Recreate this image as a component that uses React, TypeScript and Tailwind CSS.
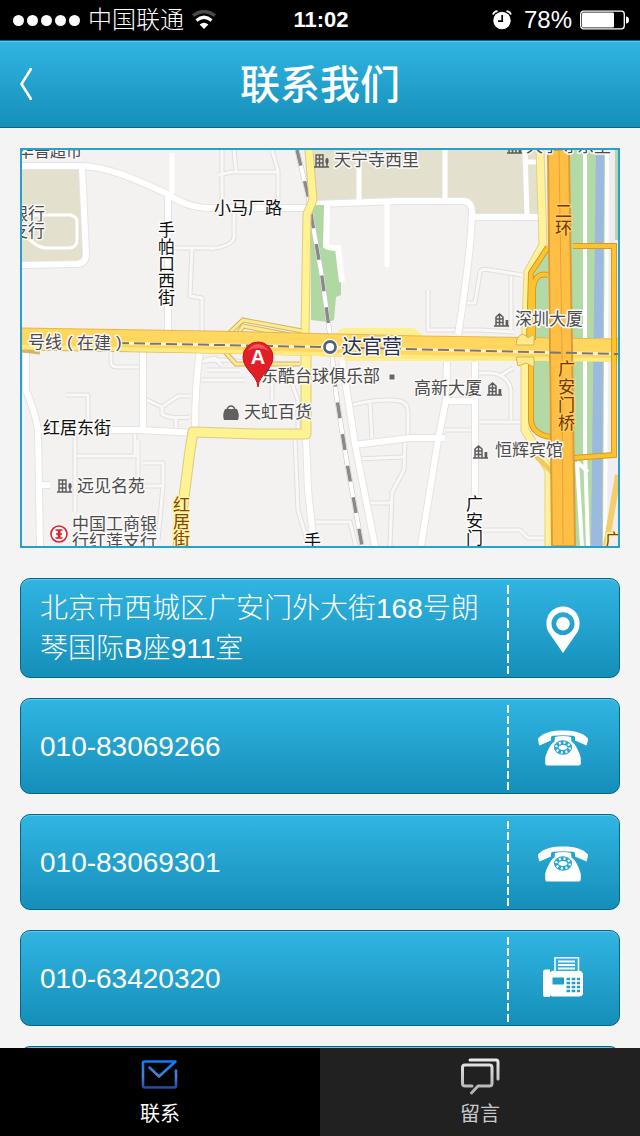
import type { ReactNode } from "react";

const surface =
  "bg-linear-to-b from-[#31b5e2] to-[#138fb9] border-[#05658a] shadow-[inset_0_1px_0_#5cc8ec]";

function StatusBar() {
  return (
    <div className="flex h-10 shrink-0 items-center bg-black text-2xl leading-10 whitespace-nowrap text-white">
      <div className="flex flex-1 items-center pl-[13px]">
        <div className="flex gap-[3px]">
          {[0, 1, 2, 3, 4].map((dot) => (
            <span key={dot} className="size-[11px] rounded-full bg-white" />
          ))}
        </div>
        <span className="ml-2 font-light">中国联通</span>
        <svg className="ml-2 h-5 w-6" viewBox="0 0 24 20" fill="none" aria-label="Wi-Fi">
          <path d="M1 5.500 Q12 -2.500 23 5.500" stroke="#4a4a4a" strokeWidth="3.200" />
          <path d="M4.500 10.500 Q12 4 19.500 10.500" stroke="#fff" strokeWidth="3.200" />
          <path d="M12 19 L7.600 14.500 Q12 10.800 16.400 14.500 Z" fill="#fff" />
        </svg>
      </div>
      <span className="text-center text-[22px] font-bold">11:02</span>
      <div className="flex flex-1 items-center justify-end pr-[11px]">
        <svg className="h-5 w-5" viewBox="0 0 20 20" fill="none" aria-label="Alarm">
          <circle cx="10" cy="10.500" r="8.700" fill="#fff" />
          <path d="M1 4.500 Q2 1.500 5.500 1.200 M19 4.500 Q18 1.500 14.500 1.200" stroke="#fff" strokeWidth="1.700" />
          <path d="M10.200 5 V11.200 H6" stroke="#000" strokeWidth="1.700" />
        </svg>
        <span className="ml-3">78%</span>
        <svg className="ml-2 h-5 w-[49px]" viewBox="0 0 49 20" fill="none" aria-label="Battery">
          <rect x=".7" y="1.200" width="43.600" height="17.600" rx="3" stroke="#fff" strokeWidth="1.300" />
          <rect x="2" y="2.500" width="32" height="15" rx="1" fill="#fff" />
          <path d="M46 6.500 Q49 6.500 49 10 Q49 13.500 46 13.500 Z" fill="#fff" />
        </svg>
      </div>
    </div>
  );
}

type LabelProps = { x: number; y: number; children: string; size?: number; fill?: string };

function Label({ x, y, children, size = 17, fill = "#4c4c4c" }: LabelProps) {
  return (
    <text x={x} y={y} fontSize={size} fill={fill} stroke="#faf9f8" strokeWidth="3" paintOrder="stroke" strokeLinejoin="round">
      {children}
    </text>
  );
}

function VerticalLabel({
  x,
  y,
  children,
  step = 17,
  fill = "#111",
  halo = "#fff",
}: LabelProps & { step?: number; halo?: string }) {
  return (
    <text fontSize="17" fill={fill} stroke={halo} strokeWidth="3" paintOrder="stroke" strokeLinejoin="round">
      {[...children].map((char, i) => (
        <tspan key={i} x={x} y={y + i * step}>
          {char}
        </tspan>
      ))}
    </text>
  );
}

function Tower({ x, y }: { x: number; y: number }) {
  return (
    <g transform={`translate(${x} ${y})`} stroke="#5c5c5c" strokeWidth="1.500" fill="none">
      <path d="M0 13 H15 M2 13 V4 L5.500 1 L9 4 V13 M5.500 2 V13 M2 6 H9 M2 9.500 H9 M12.500 13 V7" />
      <path d="M13 7 V13" strokeWidth="2.500" />
    </g>
  );
}

function Estate({ x, y }: { x: number; y: number }) {
  return (
    <g transform={`translate(${x} ${y})`} stroke="#5c5c5c" strokeWidth="1.400" fill="none">
      <path d="M0 13 H15 M2 13 V1 H9 V13 M5.500 1 V13 M2 5 H9 M2 9 H9 M13 8 V13" />
      <ellipse cx="13" cy="7" rx="1.600" ry="3" fill="#5c5c5c" stroke="none" />
    </g>
  );
}

const minorRoads = [
  "M222 150 V206",
  "M218 175 L232 172 H278",
  "M234 150 L236 171",
  "M272 150 L278 171 V204",
  "M234 210 V238 Q232 246 210 249",
  "M175 248 H212",
  "M192 249 L190 296 L202 298 V335",
  "M428 290 V330 H480 L514 332",
  "M466 303 H475 L480 272 Q482 268 490 270 L522 275",
  "M511 276 V330",
  "M111 350 V362 Q111 367 117 367 H142",
  "M66 395 H88 V428",
  "M75 430 V512",
  "M77 456 H135 V432",
  "M138 440 V480 M143 463 H163 V486 M163 486 H120 M163 486 L158 540",
  "M145 399 L162 407 L178 396 H191 M162 407 V414 Q168 419 190 417 M176 418 V430",
  "M198 362 Q220 358 245 362 M200 380 H245 M207 370 H240",
  "M205 360 L215 358 L222 366",
  "M295 438 L298 510 L308 544",
  "M272 360 V400 M285 365 L298 400 V430",
  "M314 522 H350 L356 546",
  "M352 405 Q380 398 400 401 Q408 403 408 412 V438",
  "M370 403 L372 440",
  "M405 440 L404 470 L392 492 L390 546",
  "M356 459 L403 457",
  "M362 503 H392",
  "M445 430 H473 M479 422 H524 M511 420 V390 Q508 374 490 373 H478",
  "M500 376 L513 368",
  "M480 530 H520 L528 538 H548",
];

const majorRoads = [
  "M22 166 H82 C112 167 142 183 168 194 C184 206 200 209 222 208 H306",
  "M82 168 L86 254 Q86 264 76 264 L22 265",
  "M168 194 V335",
  "M143 350 V430",
  "M200 350 Q195 385 195 432",
  "M26 346 V390 Q36 415 38 430 L40 546",
  "M40 430 H140 L195 433",
  "M40 485 H50",
  "M314 204 L400 201 H465 Q473 203 472 216 Q470 260 458 335",
  "M472 217 H542",
  "M342 360 L355 444 L375 546",
  "M354 445 L410 438 H445",
  "M447 362 L446 400 L438 440 L421 546",
  "M475 362 V495",
  "M446 401 H476",
  "M306 438 L308 490 L314 546",
];

function MapView() {
  return (
    <svg
      className="block h-auto w-full border-2 border-[#27a0cb]"
      viewBox="22 150 596 396"
      fill="none"
      role="img"
      aria-label="地图"
    >
      <rect x="22" y="150" width="596" height="396" fill="#f4f2f1" />
      <path d="M22 168 H80 L84 250 Q84 261 74 262 L22 263 Z" fill="#e3e0ce" />
      <path d="M314 150 H538 L540 214 H475 Q474 200 464 199 L316 202 Z" fill="#e3e0ce" />

      {/* Local streets: a faint casing below a pale core */}
      <g stroke="#e1dfdd" strokeWidth="5" strokeLinejoin="round">
        {minorRoads.map((d) => <path key={d} d={d} />)}
      </g>
      <g stroke="#f9f8f7" strokeWidth="3" strokeLinejoin="round">
        {minorRoads.map((d) => <path key={d} d={d} />)}
      </g>
      <g stroke="#e6e4e2" strokeWidth="8" strokeLinejoin="round">
        {majorRoads.map((d) => <path key={d} d={d} />)}
      </g>
      <g stroke="#fff" strokeWidth="6" strokeLinejoin="round">
        {majorRoads.map((d) => <path key={d} d={d} />)}
      </g>
      <g stroke="#fff" strokeWidth="5" strokeLinecap="round">
        <path d="M172 155 V192 M359 163 V200 M387 204 V265 M445 150 V200" />
        <path d="M525 150 L527 216 M525 162 H540" />
        <path d="M22 215 H70 Q77 216 77 222 V240 Q77 248 68 248 H45 Q38 247 30 240" strokeWidth="3" />
      </g>

      <path d="M311 205 H325 V248 L336 251 L341 280 V295 L336 297 L334 320 Q330 323 320 321 L311 320 Z" fill="#b0d8a2" />
      <path d="M327 205 L326 246 Q328 248 338 248 L342 282" stroke="#fff" strokeWidth="6" />

      <path d="M297 150 L308 195 L312 220 L322 277 L330 335 L336 393 L347 463 L362 546" stroke="#c9c7c5" strokeWidth="5" />
      <path d="M297 150 L308 195 L312 220 L322 277 L330 335 L336 393 L347 463 L362 546" stroke="#fff" strokeWidth="4" />
      <path d="M297 150 L308 195 L312 220 L322 277 L330 335 L336 393 L347 463 L362 546" stroke="#8b8987" strokeWidth="3.400" strokeDasharray="16 16" />

      {/* River and green belt */}
      <path d="M570 150 H606 V546 H572 Z" fill="#b3d9a6" />
      <path d="M606 150 H618 V546 H606 Z" fill="#efedf0" />
      <path d="M615 150 H618 V240 H615 Z" fill="#b3d9a6" />
      <path d="M596 150 H604 L602 546 H591 Z" fill="#9cb9df" />
      <path d="M585 150 V450 L588 546 M607 150 L605 546 M577 462 L582 546 M577 462 L588 472" stroke="#fff" strokeWidth="4" />
      <path d="M548 250 L534 275 V425 Q538 437 550 437 Z" fill="#b3d9a6" />

      {/* Yellow streets */}
      <g stroke="#dcc987" strokeLinejoin="round">
        <path d="M309 150 L313 200 L307 214 L305 335" strokeWidth="9" />
        <path d="M306 345 V434 L256 434 L193 432 L190 450 L184 497 L178 546" strokeWidth="11" />
      </g>
      <g stroke="#fff291" strokeLinejoin="round">
        <path d="M309 150 L313 200 L307 214 L305 335" strokeWidth="7" />
        <path d="M306 345 V434 L256 434 L193 432 L190 450 L184 497 L178 546" strokeWidth="9" />
      </g>
      <path d="M540 150 L543 245 L528 272 L525 350 L525 430 L549 470 V546" stroke="#e2d28f" strokeWidth="9" />
      <path d="M540 150 L543 245 L528 272 L525 350 L525 430 L549 470 V546" stroke="#fff29a" strokeWidth="7" />
      <path d="M22 350 L40 352 M226 336 L243 320 L302 331 M238 334 L243 326 L290 335 M225 352 L236 364 H300" stroke="#cdb66b" strokeWidth="5" />
      <path d="M226 336 L243 320 L302 331 M238 334 L243 326 L290 335 M225 352 L236 364 H300" stroke="#ffe98b" strokeWidth="3" />

      {/* Boulevard */}
      <path d="M336 334 Q338 329 345 328 H410 Q418 328 424 338 H618 V361 H345 Z" fill="#ffef90" />
      <path d="M22 339 L210 342 L420 347 L618 350" stroke="#e3b84b" strokeWidth="23" />
      <path d="M22 339 L210 342 L420 347 L618 350" stroke="#ffd75e" strokeWidth="21" />
      <path d="M22 347 L210 351 L420 357 L618 360" stroke="#ffea7f" strokeWidth="4" />
      <path d="M118 343 L320 347 L618 354" stroke="#fff2c8" strokeWidth="3" />

      {/* Ring road and ramps */}
      <path d="M573 246 H614 V455 L573 458 M548 247 L531 273 L529 340 M548 275 Q534 272 533 290 V340 M531 362 V420 Q532 434 550 437" stroke="#d89a20" strokeWidth="6" />
      <path d="M573 246 H614 V455 L573 458 M548 247 L531 273 L529 340 M548 275 Q534 272 533 290 V340 M531 362 V420 Q532 434 550 437" stroke="#fcc331" strokeWidth="4" />
      <path d="M517 339 Q522 330 528 338 L534 334 V345 H516 Z M516 357 H534 V367 L526 363 L518 366 Z" fill="#ffe98b" stroke="#d5b458" />
      <path d="M535 455 L554 474" stroke="#f4c85a" strokeWidth="5" />
      <path d="M548 150 H569 L572 350 L575 546 H552 L550 350 Z" fill="#ffbf45" stroke="#dd9c35" strokeWidth="2" />
      <path d="M559 150 L562 350 L563 546" stroke="#e7a238" strokeWidth="1" />
      <path d="M618 475 L606 546" stroke="#f2cf6b" strokeWidth="6" />
      <path d="M118 343 L320 347 L618 354" stroke="#7c776d" strokeWidth="2" strokeDasharray="11 5" />

      <g>
        <Label x={18} y={157} size={16}>华普超市</Label>
        <Label x={11} y={220}>银行</Label>
        <Label x={11} y={237}>支行</Label>
        <Label x={334} y={166}>天宁寺西里</Label>
        <Label x={526} y={152}>天宁寺东里</Label>
        <Label x={214} y={214} fill="#111">小马厂路</Label>
        <Label x={515} y={325}>深圳大厦</Label>
        <Label x={28} y={348}>号线</Label>
        <Label x={67} y={348}>(</Label>
        <Label x={77} y={349}>在建</Label>
        <Label x={116} y={348}>)</Label>
        <Label x={261} y={382}>东酷台球俱乐部</Label>
        <Label x={342} y={354} size={20} fill="#25304d">达官营</Label>
        <Label x={414} y={394}>高新大厦</Label>
        <Label x={244} y={418}>天虹百货</Label>
        <Label x={43} y={434} fill="#111">红居东街</Label>
        <Label x={495} y={456}>恒辉宾馆</Label>
        <Label x={77} y={492}>远见名苑</Label>
        <Label x={72} y={530}>中国工商银</Label>
        <Label x={72} y={547}>行红莲支行</Label>
        <VerticalLabel x={158} y={236}>手帕口西街</VerticalLabel>
        <VerticalLabel x={466} y={510}>广安门</VerticalLabel>
        <VerticalLabel x={304} y={547}>手</VerticalLabel>
        <VerticalLabel x={555} y={217} fill="#6f3800" halo="#ffc659">二环</VerticalLabel>
        <VerticalLabel x={558} y={375} step={18} fill="#6f3800" halo="#ffc659">广安门桥</VerticalLabel>
        <VerticalLabel x={173} y={511} fill="#85450a" halo="#fff3a5">红居街</VerticalLabel>
        <VerticalLabel x={605} y={546} fill="#85450a" halo="#fff3a5">广</VerticalLabel>
      </g>

      <Estate x={314} y={154} />
      <Estate x={57} y={479} />
      <Tower x={507} y={140} />
      <Tower x={494} y={313} />
      <Tower x={487} y={382} />
      <Tower x={473} y={445} />
      <rect x="389" y="374" width="6" height="6" fill="#666" stroke="#faf9f8" />
      <path d="M225 409 H237 Q240 415 238 420 H224 Q222 415 225 409 Z" fill="#606060" />
      <path d="M227 410 Q228 406 231 406 Q234 406 235 410" stroke="#606060" strokeWidth="1.600" />
      <circle cx="59" cy="534" r="8" fill="#fff" stroke="#d8252e" strokeWidth="1.600" />
      <path d="M55.500 530 H58.500 V538 H55.500 M62.500 530 H59.800 V538 H62.500 M56 534 H62" stroke="#d8252e" strokeWidth="1.500" />
      <circle cx="330" cy="347" r="8" fill="#fff" />
      <circle cx="330" cy="347" r="5.500" fill="#fff" stroke="#55617a" strokeWidth="2.800" />

      <path d="M258 387 C257 374 243 370 243 357 A15 15 0 0 1 273 357 C273 370 259 374 258 387 Z" fill="#e21f26" stroke="#c5161c" />
      <path d="M247 351 Q258 337 269 351 Q258 345 247 351 Z" fill="#f0575a" />
      <text x="258" y="364" fontSize="20" fontWeight="700" textAnchor="middle" fill="#fff">A</text>
    </svg>
  );
}

function PinIcon() {
  return (
    <svg className="h-12 w-[34px]" viewBox="0 0 34 48" aria-hidden="true">
      <path
        fillRule="evenodd"
        fill="#fff"
        d="M17 47 L2.500 26 A17 17 0 0 1 .400 17 A16.600 16.600 0 0 1 33.600 17 A17 17 0 0 1 31.500 26 Z M17 6.200 A11.500 11.500 0 1 0 17 29.200 A11.500 11.500 0 1 0 17 6.200 Z"
      />
      <circle cx="17" cy="17.700" r="6.800" fill="#fff" />
    </svg>
  );
}

function PhoneIcon() {
  return (
    <svg className="h-9 w-[50px]" viewBox="0 0 50 36" fill="none" aria-hidden="true">
      <path
        fill="#fff"
        d="M0 8.500 C5 2 16 .400 25 .400 C34 .400 45 2 50 8.500 C50 11 49 14 48.500 15.500 L37 10.500 V7.500 C37 6.500 36 6 35 5.800 Q25 4.600 15 5.800 C14 6 13 6.500 13 7.500 V10.500 L1.500 15.500 C1 14 0 11 0 8.500 Z"
      />
      <path
        fill="#fff"
        d="M17 7 Q25 5 33 7 L33.500 11.500 C38 14 42 24 42.800 28 V33 Q42.800 35.600 40 35.600 H10 Q7.200 35.600 7.200 33 V28 C8 24 12 14 16.500 11.500 Z"
      />
      <ellipse cx="25" cy="17.500" rx="6.800" ry="4.900" stroke="#27a7d2" strokeWidth="4.600" />
      <ellipse cx="25" cy="17.500" rx="6.800" ry="4.900" stroke="#fff" strokeWidth="2.400" strokeDasharray="2 2.650" />
    </svg>
  );
}

function FaxIcon() {
  return (
    <svg className="h-[46px] w-10" viewBox="0 0 40 46" fill="none" aria-hidden="true">
      <path d="M0 15 Q0 12.500 2 12.500 H7 V15 Q9 13.500 11 13.500 H36 Q40 14 40 18 V36 Q40 39.500 36 39.500 H10 Q8 39.500 7 38 V40 H2 Q0 40 0 38 Z" fill="#fff" />
      <path d="M12 14 V.700 H35.500 V14" fill="#2cafda" stroke="#fff" strokeWidth="1.500" />
      <path d="M15 4.500 H32 M15 8 H32 M15 11.500 H32" stroke="#fff" strokeWidth="2.200" />
      <path d="M9.500 20.500 H21 V27.500 H9.500 Z" fill="#1f9fca" />
      <path d="M23.500 22 H37 M23.500 26 H37 M23.500 30 H37 M23.500 34 H37" stroke="#1f9fca" strokeWidth="2.500" strokeDasharray="3.600 1.600" />
    </svg>
  );
}

function ContactCard({ href, icon, children }: { href: string; icon: ReactNode; children: ReactNode }) {
  return (
    <a href={href} className={`flex min-h-24 shrink-0 rounded-[10px] border text-white ${surface}`}>
      <span className="flex flex-1 items-center pt-2.5 pr-4 pb-2 pl-[19px] text-[28px] leading-10 font-light">
        {children}
      </span>
      <span className="flex w-0.5 flex-col gap-[3px] pt-1.5 pb-[3px]" aria-hidden="true">
        {[0, 1, 2, 3, 4, 5, 6, 7].map((dash) => (
          <span key={dash} className="flex-1 bg-white" />
        ))}
      </span>
      <span className="flex w-[110px] items-center justify-center pt-1 pr-0.5">{icon}</span>
    </a>
  );
}

function MailIcon() {
  return (
    <svg className="h-8 w-10" viewBox="0 0 40 32" fill="none" aria-hidden="true">
      <defs>
        <linearGradient id="mail-blue" x1="0" y1="0" x2="0" y2="32" gradientUnits="userSpaceOnUse">
          <stop stopColor="#0a78ff" />
          <stop offset=".55" stopColor="#4583cf" />
          <stop offset="1" stopColor="#1a3aa0" />
        </linearGradient>
      </defs>
      <path
        d="M36 11.500 V27 Q36 28.500 34.500 28.500 H4.500 Q3 28.500 3 27 V4 Q3 2.500 4.500 2.500 H35.500 L19 17.500 L9.500 8.500"
        stroke="url(#mail-blue)"
        strokeWidth="2.600"
        strokeLinecap="round"
        strokeLinejoin="round"
      />
    </svg>
  );
}

function MessagesIcon() {
  return (
    <svg className="h-[38px] w-10" viewBox="0 0 40 38" fill="none" aria-hidden="true">
      <defs>
        <linearGradient id="message-gray" x1="0" y1="0" x2="0" y2="38" gradientUnits="userSpaceOnUse">
          <stop stopColor="#eee" />
          <stop offset="1" stopColor="#aaa" />
        </linearGradient>
      </defs>
      <g stroke="url(#message-gray)" strokeWidth="3" strokeLinecap="round" strokeLinejoin="round">
        <path d="M10 3 H36 Q38 3 38 5 V22" />
        <path d="M12 29 H5 Q2.500 29 2.500 26.500 V10.500 Q2.500 8 5 8 H29.500 Q32 8 32 10.500 V26.500 Q32 29 29.500 29 H18 L11.500 36" />
      </g>
    </svg>
  );
}

export default function App() {
  return (
    <div className="flex h-screen flex-col bg-[#f4f4f4] font-['Liberation_Sans','Noto_Sans_CJK_SC',sans-serif]">
      <StatusBar />
      <header className={`flex h-[88px] shrink-0 items-center border-y px-5 ${surface}`}>
        <button type="button" aria-label="返回" className="flex w-20 items-center">
          <svg className="h-8 w-3" viewBox="0 0 12 32" fill="none" aria-hidden="true">
            <path d="M11.500 0 L1.500 16 L11.500 32" stroke="#fff" strokeWidth="2.600" />
          </svg>
        </button>
        <h1 className="flex-1 pt-0.5 text-center text-[40px] leading-[60px] font-medium text-white">联系我们</h1>
        <span className="w-20" />
      </header>
      <main className="flex min-h-0 flex-1 flex-col overflow-hidden p-5 pb-0">
        <div className="mb-[30px] shrink-0">
          <MapView />
        </div>
        <div className="flex flex-col gap-5">
          <ContactCard href="#map" icon={<PinIcon />}>北京市西城区广安门外大街168号朗琴国际B座911室</ContactCard>
          <ContactCard href="tel:010-83069266" icon={<PhoneIcon />}>010-83069266</ContactCard>
          <ContactCard href="tel:010-83069301" icon={<PhoneIcon />}>010-83069301</ContactCard>
          <ContactCard href="tel:010-63420320" icon={<FaxIcon />}>010-63420320</ContactCard>
          <div className={`h-24 shrink-0 rounded-[10px] border ${surface}`} />
        </div>
      </main>
      <nav className="grid h-[88px] shrink-0 grid-cols-2 text-xl leading-6">
        <a href="#contact" aria-current="page" className="flex flex-col items-center justify-between bg-black pt-[11px] pb-2.5 text-white">
          <MailIcon />
          联系
        </a>
        <a href="#message" className="flex flex-col items-center justify-between bg-[#212121] pt-[9px] pb-2.5 text-[#c8c8c8]">
          <MessagesIcon />
          留言
        </a>
      </nav>
    </div>
  );
}
